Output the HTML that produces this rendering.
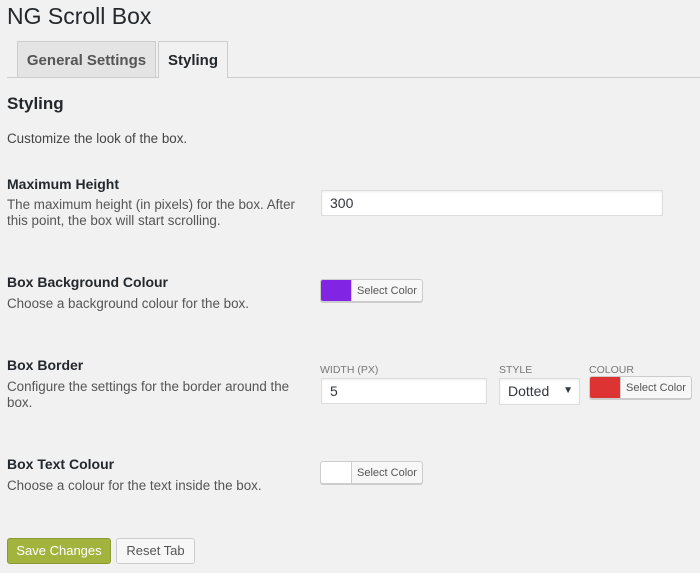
<!DOCTYPE html>
<html><head><style>
body{margin:0;width:700px;height:573px;background:#f1f1f1;font-family:"Liberation Sans",sans-serif;color:#23282d;position:relative;overflow:hidden}
.a{position:absolute;white-space:nowrap}
h1{position:absolute;left:7px;top:3px;margin:0;font-size:23px;font-weight:400}
.tab{position:absolute;top:41px;height:35px;border:1px solid #ccc;border-bottom:none;font-size:15px;font-weight:bold;line-height:37px;text-align:center}
.lbl{font-size:14px;font-weight:bold;color:#23282d}
.d{font-size:13.4px;color:#555;line-height:16px}
.in{position:absolute;background:#fff;border:1px solid #ddd;box-shadow:inset 0 1px 2px rgba(0,0,0,.07);font-size:14px;line-height:24px;padding-left:8px;box-sizing:border-box;color:#32373c}
.cp{position:absolute;height:23px;width:103px;border:1px solid #ccc;border-radius:3px;background:#f7f7f7;box-sizing:border-box;box-shadow:0 1px 0 #ccc;overflow:hidden}
.cp i{position:absolute;left:0;top:0;bottom:0;width:30px;border-right:1px solid #ccc}
.cp span{position:absolute;left:36px;top:1px;font-size:11px;line-height:21px;color:#555}
.sm{font-size:10.5px;color:#777}
.btn{position:absolute;top:538px;height:26px;border-radius:3px;box-sizing:border-box;font-size:13px;line-height:24px;text-align:center}
</style></head><body>
<h1>NG Scroll Box</h1>
<div class="a" style="left:7px;top:77px;width:693px;border-top:1px solid #ccc"></div>
<div class="tab" style="left:17px;width:137px;background:#e4e4e4;color:#555">General Settings</div>
<div class="tab" style="left:158px;width:68px;height:36px;background:#f1f1f1;color:#23282d">Styling</div>
<div class="a" style="left:7px;top:94px;font-size:17px;font-weight:bold">Styling</div>
<div class="a d" style="left:7px;top:131px;color:#444">Customize the look of the box.</div>

<div class="a lbl" style="left:7px;top:176px">Maximum Height</div>
<div class="a d" style="left:7px;top:197px">The maximum height (in pixels) for the box. After<br>this point, the box will start scrolling.</div>
<div class="in" style="left:321px;top:190px;width:342px;height:26px">300</div>

<div class="a lbl" style="left:7px;top:274px">Box Background Colour</div>
<div class="a d" style="left:7px;top:296px">Choose a background colour for the box.</div>
<div class="cp" style="left:320px;top:279px"><i style="background:#8224e3"></i><span>Select Color</span></div>

<div class="a lbl" style="left:7px;top:357px">Box Border</div>
<div class="a d" style="left:7px;top:379px">Configure the settings for the border around the<br>box.</div>
<div class="a sm" style="left:320px;top:364px">WIDTH (PX)</div>
<div class="a sm" style="left:499px;top:364px">STYLE</div>
<div class="a sm" style="left:589px;top:364px">COLOUR</div>
<div class="in" style="left:321px;top:378px;width:166px;height:26px">5</div>
<div class="in" style="left:499px;top:378px;width:81px;height:27px">Dotted<span style="position:absolute;right:6px;font-size:10px">▼</span></div>
<div class="cp" style="left:589px;top:376px"><i style="background:#dd3333"></i><span>Select Color</span></div>

<div class="a lbl" style="left:7px;top:456px">Box Text Colour</div>
<div class="a d" style="left:7px;top:478px">Choose a colour for the text inside the box.</div>
<div class="cp" style="left:320px;top:461px"><i style="background:#fff"></i><span>Select Color</span></div>

<div class="btn" style="left:7px;width:104px;background:#a3b43e;border:1px solid #8a9a2e;color:#fff">Save Changes</div>
<div class="btn" style="left:116px;width:79px;background:#f7f7f7;border:1px solid #ccc;color:#555">Reset Tab</div>
</body></html>
